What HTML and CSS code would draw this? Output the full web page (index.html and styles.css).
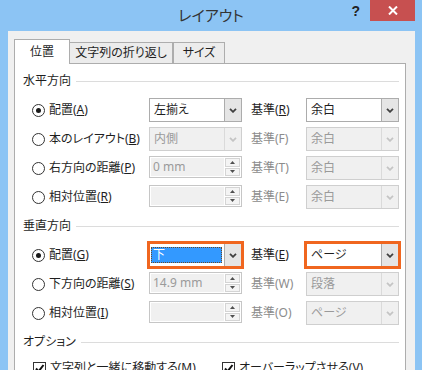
FILE: index.html
```html
<!DOCTYPE html>
<html lang="ja">
<head>
  <meta charset="UTF-8">
  <title>レイアウト</title>
  <link rel="stylesheet" href="styles.css">
</head>
<body>
  <div class="dialog">
    <!-- タイトルバー -->
    <div class="titlebar">
      <div></div>
      <div class="title">レイアウト</div>
      <div class="controls">
        <span class="help">?</span>
        <span class="close">
          <svg width="10" height="9" viewBox="0 0 10 9"><path d="M1 0.5 L9 8.5 M9 0.5 L1 8.5" stroke="#fff" stroke-width="2"/></svg>
        </span>
      </div>
    </div>

    <div class="client">
      <!-- タブ -->
      <div class="tabs">
        <div class="tab active">位置</div>
        <div class="tab second">文字列の折り返し</div>
        <div class="tab">サイズ</div>
      </div>

      <div class="panel">
        <!-- 水平方向 -->
        <div class="group-head"><span>水平方向</span></div>
        <div class="row">
          <label class="opt"><span class="radio checked"></span><span>配置(<u>A</u>)</span></label>
          <div class="combo"><span class="value">左揃え</span><span class="arrow"><svg width="8" height="5" viewBox="0 0 8 5"><path d="M1 0.8 L4 3.8 L7 0.8" fill="none" stroke="#404040" stroke-width="1.8"/></svg></span></div>
          <span class="ref">基準(<u>R</u>)</span>
          <div class="combo"><span class="value">余白</span><span class="arrow"><svg width="8" height="5" viewBox="0 0 8 5"><path d="M1 0.8 L4 3.8 L7 0.8" fill="none" stroke="#404040" stroke-width="1.8"/></svg></span></div>
        </div>
        <div class="row">
          <label class="opt"><span class="radio"></span><span>本のレイアウト(<u>B</u>)</span></label>
          <div class="combo off"><span class="value">内側</span><span class="arrow"><svg width="8" height="5" viewBox="0 0 8 5"><path d="M1 0.8 L4 3.8 L7 0.8" fill="none" stroke="#c4c4c4" stroke-width="1.8"/></svg></span></div>
          <span class="ref off">基準(F)</span>
          <div class="combo off"><span class="value">余白</span><span class="arrow"><svg width="8" height="5" viewBox="0 0 8 5"><path d="M1 0.8 L4 3.8 L7 0.8" fill="none" stroke="#c4c4c4" stroke-width="1.8"/></svg></span></div>
        </div>
        <div class="row">
          <label class="opt"><span class="radio"></span><span>右方向の距離(<u>P</u>)</span></label>
          <div class="spinner"><span class="field">0 mm</span><span class="spin"><span class="btn"><svg width="5" height="3" viewBox="0 0 5 3"><path d="M0 3 L2.5 0 L5 3 Z" fill="#505050"/></svg></span><span class="btn"><svg width="5" height="3" viewBox="0 0 5 3"><path d="M0 0 L2.5 3 L5 0 Z" fill="#505050"/></svg></span></span></div>
          <span class="ref off">基準(T)</span>
          <div class="combo off"><span class="value">余白</span><span class="arrow"><svg width="8" height="5" viewBox="0 0 8 5"><path d="M1 0.8 L4 3.8 L7 0.8" fill="none" stroke="#c4c4c4" stroke-width="1.8"/></svg></span></div>
        </div>
        <div class="row">
          <label class="opt"><span class="radio"></span><span>相対位置(<u>R</u>)</span></label>
          <div class="spinner"><span class="field"></span><span class="spin"><span class="btn"><svg width="5" height="3" viewBox="0 0 5 3"><path d="M0 3 L2.5 0 L5 3 Z" fill="#505050"/></svg></span><span class="btn"><svg width="5" height="3" viewBox="0 0 5 3"><path d="M0 0 L2.5 3 L5 0 Z" fill="#505050"/></svg></span></span></div>
          <span class="ref off">基準(E)</span>
          <div class="combo off"><span class="value">余白</span><span class="arrow"><svg width="8" height="5" viewBox="0 0 8 5"><path d="M1 0.8 L4 3.8 L7 0.8" fill="none" stroke="#c4c4c4" stroke-width="1.8"/></svg></span></div>
        </div>

        <!-- 垂直方向 -->
        <div class="group-head"><span>垂直方向</span></div>
        <div class="row">
          <label class="opt"><span class="radio checked"></span><span>配置(<u>G</u>)</span></label>
          <div class="combo focus"><span class="value sel"><span>下</span></span><span class="arrow"><svg width="8" height="5" viewBox="0 0 8 5"><path d="M1 0.8 L4 3.8 L7 0.8" fill="none" stroke="#404040" stroke-width="1.8"/></svg></span></div>
          <span class="ref">基準(<u>E</u>)</span>
          <div class="combo focus"><span class="value">ページ</span><span class="arrow"><svg width="8" height="5" viewBox="0 0 8 5"><path d="M1 0.8 L4 3.8 L7 0.8" fill="none" stroke="#404040" stroke-width="1.8"/></svg></span></div>
        </div>
        <div class="row">
          <label class="opt"><span class="radio"></span><span>下方向の距離(<u>S</u>)</span></label>
          <div class="spinner"><span class="field">14.9 mm</span><span class="spin"><span class="btn"><svg width="5" height="3" viewBox="0 0 5 3"><path d="M0 3 L2.5 0 L5 3 Z" fill="#505050"/></svg></span><span class="btn"><svg width="5" height="3" viewBox="0 0 5 3"><path d="M0 0 L2.5 3 L5 0 Z" fill="#505050"/></svg></span></span></div>
          <span class="ref off">基準(W)</span>
          <div class="combo off"><span class="value">段落</span><span class="arrow"><svg width="8" height="5" viewBox="0 0 8 5"><path d="M1 0.8 L4 3.8 L7 0.8" fill="none" stroke="#c4c4c4" stroke-width="1.8"/></svg></span></div>
        </div>
        <div class="row">
          <label class="opt"><span class="radio"></span><span>相対位置(<u>I</u>)</span></label>
          <div class="spinner"><span class="field"></span><span class="spin"><span class="btn"><svg width="5" height="3" viewBox="0 0 5 3"><path d="M0 3 L2.5 0 L5 3 Z" fill="#505050"/></svg></span><span class="btn"><svg width="5" height="3" viewBox="0 0 5 3"><path d="M0 0 L2.5 3 L5 0 Z" fill="#505050"/></svg></span></span></div>
          <span class="ref off">基準(O)</span>
          <div class="combo off"><span class="value">ページ</span><span class="arrow"><svg width="8" height="5" viewBox="0 0 8 5"><path d="M1 0.8 L4 3.8 L7 0.8" fill="none" stroke="#c4c4c4" stroke-width="1.8"/></svg></span></div>
        </div>

        <!-- オプション -->
        <div class="group-head"><span>オプション</span></div>
        <div class="checks">
          <label class="chk first"><span class="box"><svg width="11" height="11" viewBox="0 0 11 11"><path d="M2 5.5 L4.5 8.5 L9.5 2" fill="none" stroke="#111" stroke-width="2"/></svg></span><span>文字列と一緒に移動する(<u>M</u>)</span></label>
          <label class="chk"><span class="box"><svg width="11" height="11" viewBox="0 0 11 11"><path d="M2 5.5 L4.5 8.5 L9.5 2" fill="none" stroke="#111" stroke-width="2"/></svg></span><span>オーバーラップさせる(<u>V</u>)</span></label>
        </div>
      </div>
    </div>
  </div>
</body>
</html>
```

FILE: styles.css
```css
/* ページ全体 */
body {
  margin: 0;
  width: 422px;
  height: 370px;
  overflow: hidden;
  background: #8cc4f4;
  font-family: "Noto Sans", "Noto Sans CJK JP", sans-serif;
  font-size: 12px;
  font-feature-settings: "palt";
  color: #1e1e1e;
}

.dialog {
  display: flex;
  flex-direction: column;
  height: 100%;
}

/* タイトルバー */
.titlebar {
  display: grid;
  grid-template-columns: 1fr auto 1fr;
  height: 31px;
  flex-shrink: 0;
}

.title {
  font-size: 15px;
  line-height: 31px;
  color: #333;
}

.controls {
  justify-self: end;
  display: flex;
  align-items: center;
  gap: 10px;
  height: 21px;
  margin-right: 7px;
}

.help {
  font-family: "Liberation Sans", sans-serif;
  font-weight: bold;
  font-size: 14px;
  color: #222;
}

.close {
  width: 45px;
  height: 21px;
  background: #c75050;
  display: flex;
  align-items: center;
  justify-content: center;
}

/* クライアント領域 */
.client {
  flex: 1;
  margin: 0 7px 0 8px;
  background: #f0f0f0;
  display: flex;
  flex-direction: column;
}

/* タブ */
.tabs {
  display: flex;
  align-items: flex-end;
  padding: 8px 0 0 6px;
}

.tab {
  box-sizing: border-box;
  height: 21px;
  border: 1px solid #adadad;
  border-bottom: none;
  background: #ececec;
  line-height: 20px;
  text-align: center;
}

.tab.active {
  width: 56px;
  height: 25px;
  line-height: 24px;
  background: #fff;
  margin-bottom: -1px;
  position: relative;
  z-index: 1;
}

.tab.second {
  width: 104px;
  margin-left: -1px;
}

.tab:last-child {
  width: 52px;
}

/* タブの中身 */
.panel {
  flex: 1;
  box-sizing: border-box;
  width: 392px;
  margin-left: 6px;
  border: 1px solid #adadad;
  background: #fff;
  padding: 5px 6px 0 8px;
  display: flex;
  flex-direction: column;
  gap: 5px;
}

.group-head {
  display: flex;
  align-items: center;
  height: 24px;
  line-height: 24px;
}

.group-head::after {
  content: "";
  flex: 1;
  height: 1px;
  margin-left: 5px;
  background: #dcdcdc;
}

.row {
  display: grid;
  grid-template-columns: 117px 93px 64px 93px;
  align-items: center;
  height: 24px;
  margin-left: 9px;
}

.opt {
  display: flex;
  align-items: center;
  gap: 4px;
  line-height: 16px;
}

.radio {
  box-sizing: border-box;
  width: 13px;
  height: 13px;
  border: 1px solid #333;
  border-radius: 50%;
  background: #fff;
  display: grid;
  place-items: center;
}

.radio.checked::after {
  content: "";
  width: 5px;
  height: 5px;
  border-radius: 50%;
  background: #1a1a1a;
}

.ref {
  padding-left: 9px;
  line-height: 16px;
}

.ref.off {
  color: #8c8c8c;
}

/* コンボボックス */
.combo {
  box-sizing: border-box;
  height: 24px;
  border: 1px solid #acacac;
  background: #fff;
  display: flex;
}

.combo .value {
  flex: 1;
  padding-left: 4px;
  line-height: 22px;
}

.combo .arrow {
  width: 16px;
  border-left: 1px solid #acacac;
  background: #e5e5e5;
  display: flex;
  align-items: center;
  justify-content: center;
}

.combo.off {
  border-color: #cfcfcf;
  background: #f0f0f0;
  color: #9a9a9a;
}

.combo.off .arrow {
  border-left-color: #dadada;
  background: #f0f0f0;
}

.combo.focus {
  outline: 3px solid #f0661f;
  outline-offset: -1px;
}

.combo .value.sel {
  padding: 3px 2px 3px 1px;
  line-height: 16px;
}

.combo .value.sel span {
  display: block;
  background: #3399ff;
  color: #fff;
  padding-left: 2px;
  outline: 1px dotted #6a4a2a;
  outline-offset: -1px;
}

/* スピンボックス */
.spinner {
  box-sizing: border-box;
  align-self: start;
  height: 22px;
  border: 1px solid #c6c6c6;
  background: #fff;
  padding: 1px;
  display: flex;
  gap: 1px;
}

.spinner .field {
  flex: 1;
  background: #f0f0f0;
  color: #9a9a9a;
  padding-left: 2px;
  line-height: 18px;
}

.spinner .spin {
  width: 15px;
  display: flex;
  flex-direction: column;
  gap: 1px;
}

.spinner .btn {
  flex: 1;
  border: 1px solid #d4d4d4;
  background: #f4f4f4;
  display: flex;
  align-items: center;
  justify-content: center;
}

/* チェックボックス */
.checks {
  display: flex;
  height: 18px;
  margin-left: 10px;
  align-items: center;
}

.chk {
  display: flex;
  align-items: center;
  gap: 4px;
  line-height: 16px;
}

.chk.first {
  width: 189px;
}

.box {
  box-sizing: border-box;
  width: 13px;
  height: 13px;
  border: 1px solid #333;
  background: #fff;
  display: flex;
  align-items: center;
  justify-content: center;
}
```
